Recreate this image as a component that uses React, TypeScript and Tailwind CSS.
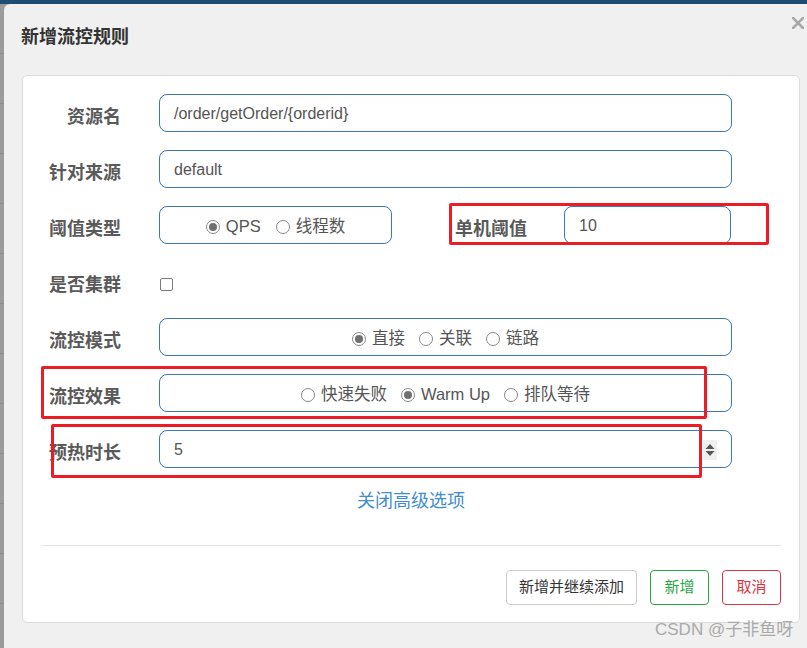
import React from "react";

const FONT = "font-['Liberation_Sans','Noto_Sans_CJK_SC',sans-serif]";

function Radio({ label, checked }: { label: string; checked?: boolean }) {
  return (
    <span className="flex items-center gap-[6px] text-[16.5px]">
      <span className="flex h-[14px] w-[14px] items-center justify-center rounded-full border border-[#8a8a8a] bg-white">
        {checked && <span className="h-[8px] w-[8px] rounded-full bg-[#6f6f6f]" />}
      </span>
      <span>{label}</span>
    </span>
  );
}

function Label({ children }: { children: React.ReactNode }) {
  return (
    <div className="h-[38px] pt-[11px] text-right text-[18px] leading-[24px] font-bold text-[#5a5a5a]">
      {children}
    </div>
  );
}

const boxCls =
  "flex h-[38px] items-center rounded-lg border border-[#3c78b5] bg-white px-[14px] pt-[2px] text-[16px] text-[#555]";

export default function App() {
  return (
    <div className={`relative h-[648px] w-[807px] overflow-hidden bg-[#9b9b9b] ${FONT}`}>
      <div className="h-[4px] bg-[#1f4b75]" />
      <div className="flex h-[644px]">
        <div className="w-[4px] bg-[repeating-linear-gradient(to_bottom,#9b9b9b_0px,#9b9b9b_49px,#8c8c8c_49px,#8c8c8c_50px)]" />
        <div className="relative flex-1 rounded-tl-md bg-[#f0f0f0]">
          {/* header */}
          <div className="ml-[17px] pt-[22px] text-[18px] leading-[22px] font-bold text-[#333]">
            新增流控规则
          </div>
          <button className="absolute top-[13px] right-[3px] p-[0px]">
            <svg width="12" height="12" viewBox="0 0 12 12">
              <path d="M1 1 L11 11 M11 1 L1 11" stroke="#a8a8a8" strokeWidth="2.6" strokeLinecap="square" />
            </svg>
          </button>

          {/* body */}
          <div className="mt-[27px] mr-[7px] ml-[18px] h-[548px] rounded-[5px] border border-[#dcdcdc] bg-white">
            <div className="grid grid-cols-[98px_573px] gap-x-[38px] gap-y-[18px] pt-[18px]">
              <Label>资源名</Label>
              <div className={boxCls}>/order/getOrder/{"{orderid}"}</div>

              <Label>针对来源</Label>
              <div className={boxCls}>default</div>

              <Label>阈值类型</Label>
              <div className="flex">
                <div className={`${boxCls} w-[233px] justify-center gap-[15px] pt-[3px]`}>
                  <Radio label="QPS" checked />
                  <Radio label="线程数" />
                </div>
                <div className="ml-[63px] w-[72px]">
                  <Label>单机阈值</Label>
                </div>
                <div className={`${boxCls} ml-[37px] w-[167px]`}>10</div>
              </div>

              <Label>是否集群</Label>
              <div className="h-[38px] pt-[16px] pl-[1px]">
                <span className="block h-[13px] w-[13px] rounded-[2px] border-[1.5px] border-[#7a7a7a] bg-white" />
              </div>

              <Label>流控模式</Label>
              <div className={`${boxCls} justify-center gap-[14px] pt-[3px]`}>
                <Radio label="直接" checked />
                <Radio label="关联" />
                <Radio label="链路" />
              </div>

              <Label>流控效果</Label>
              <div className={`${boxCls} justify-center gap-[14px] pt-[3px]`}>
                <Radio label="快速失败" />
                <Radio label="Warm Up" checked />
                <Radio label="排队等待" />
              </div>

              <Label>预热时长</Label>
              <div className={`${boxCls} justify-between pr-[14px]`}>
                <span>5</span>
                <span className="flex h-[20px] w-[14px] items-center justify-center bg-[#efefef]">
                  <svg width="10" height="16" viewBox="0 0 10 16">
                    <path d="M5 2 L9.5 7 L0.5 7 Z" fill="#555" />
                    <path d="M0.5 9 L9.5 9 L5 14 Z" fill="#555" />
                  </svg>
                </span>
              </div>
            </div>

            <div className="mt-[21px] text-center text-[18px] leading-[24px] text-[#3f8dd0]">
              关闭高级选项
            </div>

            <div className="mx-[18px] mt-[32px] h-px bg-[#e5e5e5]" />

            <div className="mt-[24px] mr-[18px] flex justify-end gap-[13px] text-[15px]">
              <button className="h-[35px] w-[131px] rounded-[4px] border border-[#cccccc] bg-white text-[#333]">
                新增并继续添加
              </button>
              <button className="h-[35px] w-[59px] rounded-[4px] border border-[#28a745] bg-white text-[#28a745]">
                新增
              </button>
              <button className="h-[35px] w-[59px] rounded-[4px] border border-[#dc3545] bg-white text-[#dc3545]">
                取消
              </button>
            </div>
          </div>
        </div>
      </div>

      {/* annotations */}
      <div className="absolute top-[203px] left-[449px] h-[42px] w-[320px] rounded-[2px] border-[3px] border-[#ec1c24]" />
      <div className="absolute top-[366px] left-[41px] h-[53px] w-[666px] rounded-[2px] border-[3px] border-[#ec1c24]" />
      <div className="absolute top-[424px] left-[51px] h-[54px] w-[651px] rounded-[2px] border-[3px] border-[#ec1c24]" />

      <div className="absolute top-[620px] left-[655px] text-[17px] leading-[20px] text-[#a9a9a9]">
        CSDN @子非鱼呀
      </div>
    </div>
  );
}
